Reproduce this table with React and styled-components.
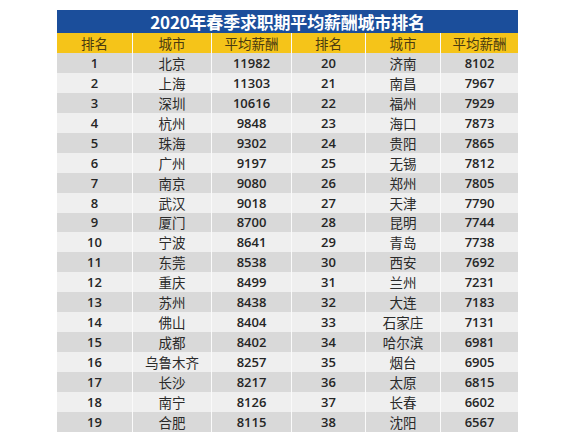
import React from "react";
import styled, { createGlobalStyle } from "styled-components";

const GlobalStyle = createGlobalStyle`
  body {
    margin: 0;
    background: #fff;
    font-family: "Noto Sans CJK SC", "Noto Sans", sans-serif;
  }
`;

const Page = styled.div`
  padding: 10px 0 0 57px;
`;

const Board = styled.div`
  width: 461px;
  background: #fff;
`;

const Title = styled.div`
  height: 23px;
  background: #1b4e9b;
  color: #fff;
  font-size: 17px;
  font-weight: 700;
  line-height: 23px;
  text-align: center;
  letter-spacing: -0.2px;
`;

const Grid = styled.div`
  display: grid;
  grid-template-columns: 75px 79px 80px 74px 75px 78px;
`;

const Cell = styled.div`
  height: ${(p) => (p.$head ? "20px" : "19.95px")};
  display: flex;
  align-items: center;
  justify-content: center;
  font-size: 13.5px;
  color: ${(p) => (p.$head ? "#4a3a10" : "#2a2a2a")};
  background: ${(p) =>
    p.$head ? "#f5c419" : p.$odd ? "#d9d9d9" : "#efefef"};
  border-left: ${(p) => (p.$first ? "none" : "1.5px solid #fafafa")};
  box-sizing: border-box;
  white-space: nowrap;
`;

const Num = styled.span`
  font-family: "Open Sans", "Noto Sans", sans-serif;
  font-weight: 600;
  font-size: 13px;
  color: #262626;
`;

const rows = [
  [1, "北京", 11982, 20, "济南", 8102],
  [2, "上海", 11303, 21, "南昌", 7967],
  [3, "深圳", 10616, 22, "福州", 7929],
  [4, "杭州", 9848, 23, "海口", 7873],
  [5, "珠海", 9302, 24, "贵阳", 7865],
  [6, "广州", 9197, 25, "无锡", 7812],
  [7, "南京", 9080, 26, "郑州", 7805],
  [8, "武汉", 9018, 27, "天津", 7790],
  [9, "厦门", 8700, 28, "昆明", 7744],
  [10, "宁波", 8641, 29, "青岛", 7738],
  [11, "东莞", 8538, 30, "西安", 7692],
  [12, "重庆", 8499, 31, "兰州", 7231],
  [13, "苏州", 8438, 32, "大连", 7183],
  [14, "佛山", 8404, 33, "石家庄", 7131],
  [15, "成都", 8402, 34, "哈尔滨", 6981],
  [16, "乌鲁木齐", 8257, 35, "烟台", 6905],
  [17, "长沙", 8217, 36, "太原", 6815],
  [18, "南宁", 8126, 37, "长春", 6602],
  [19, "合肥", 8115, 38, "沈阳", 6567],
];

const heads = ["排名", "城市", "平均薪酬", "排名", "城市", "平均薪酬"];

export default function App() {
  return (
    <Page>
      <GlobalStyle />
      <Board>
        <Title>2020年春季求职期平均薪酬城市排名</Title>
        <Grid>
          {heads.map((h, i) => (
            <Cell key={"h" + i} $head $first={i === 0}>
              {h}
            </Cell>
          ))}
          {rows.map((r, ri) =>
            r.map((v, ci) => (
              <Cell key={ri + "-" + ci} $odd={ri % 2 === 0} $first={ci === 0}>
                {typeof v === "number" ? <Num>{v}</Num> : v}
              </Cell>
            ))
          )}
        </Grid>
      </Board>
    </Page>
  );
}
